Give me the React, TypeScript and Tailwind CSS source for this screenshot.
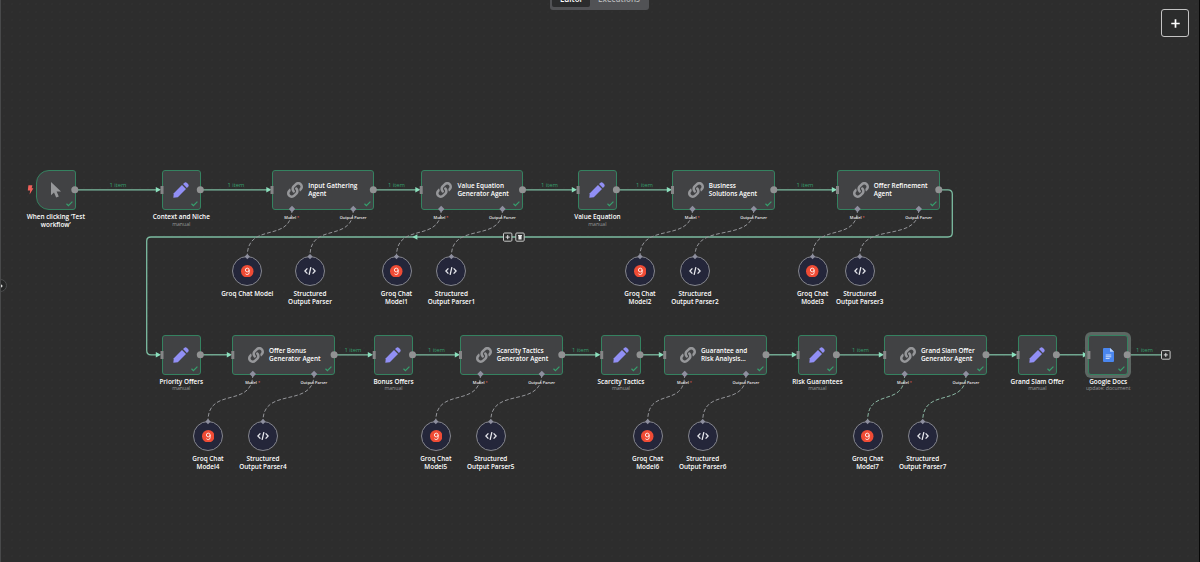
import React from "react";

type Kind = "trigger" | "edit" | "agent" | "docs";

interface FlowNode {
  kind: Kind;
  x: number;
  row: 0 | 1;
  title: string[];
  note?: string;
  models?: [number, number];
  suffix?: string;
}

const ROW_TOP = [170, 335];

const nodes: FlowNode[] = [
  { kind: "trigger", x: 36, row: 0, title: ["When clicking ‘Test", "workflow’"] },
  { kind: "edit", x: 161.5, row: 0, title: ["Context and Niche"], note: "manual" },
  { kind: "agent", x: 271.5, row: 0, title: ["Input Gathering", "Agent"], models: [247.3, 310], suffix: "" },
  { kind: "agent", x: 420.7, row: 0, title: ["Value Equation", "Generator Agent"], models: [396.5, 451.4], suffix: "1" },
  { kind: "edit", x: 577.6, row: 0, title: ["Value Equation"], note: "manual" },
  { kind: "agent", x: 672, row: 0, title: ["Business", "Solutions Agent"], models: [640, 695], suffix: "2" },
  { kind: "agent", x: 837, row: 0, title: ["Offer Refinement", "Agent"], models: [812.6, 859.8], suffix: "3" },
  { kind: "edit", x: 161.5, row: 1, title: ["Priority Offers"], note: "manual" },
  { kind: "agent", x: 232.3, row: 1, title: ["Offer Bonus", "Generator Agent"], models: [208, 263], suffix: "4" },
  { kind: "edit", x: 373.7, row: 1, title: ["Bonus Offers"], note: "manual" },
  { kind: "agent", x: 460, row: 1, title: ["Scarcity Tactics", "Generator Agent"], models: [435.8, 490.8], suffix: "5" },
  { kind: "edit", x: 601.2, row: 1, title: ["Scarcity Tactics"], note: "manual" },
  { kind: "agent", x: 664.2, row: 1, title: ["Guarantee and", "Risk Analysis..."], models: [647.7, 702.7], suffix: "6" },
  { kind: "edit", x: 797.6, row: 1, title: ["Risk Guarantees"], note: "manual" },
  { kind: "agent", x: 884.2, row: 1, title: ["Grand Slam Offer", "Generator Agent"], models: [867.6, 922.7], suffix: "7" },
  { kind: "edit", x: 1017.6, row: 1, title: ["Grand Slam Offer"], note: "manual" },
  { kind: "docs", x: 1088.4, row: 1, title: ["Google Docs"], note: "update: document" },
];

const edges: { x1: number; x2: number; y: number; label?: number }[] = [
  { x1: 76, x2: 161, y: 190, label: 118 },
  { x1: 201, x2: 271.5, y: 190, label: 236 },
  { x1: 374, x2: 420.5, y: 190, label: 396.5 },
  { x1: 523, x2: 577, y: 190, label: 549.5 },
  { x1: 617, x2: 672, y: 190, label: 644.5 },
  { x1: 774, x2: 837, y: 190, label: 805 },
  { x1: 201, x2: 232, y: 355 },
  { x1: 335, x2: 373, y: 355, label: 353 },
  { x1: 413, x2: 460, y: 355, label: 436.5 },
  { x1: 562, x2: 600.5, y: 355, label: 580.5 },
  { x1: 641, x2: 664, y: 355 },
  { x1: 767, x2: 797, y: 355 },
  { x1: 837, x2: 884, y: 355, label: 860.5 },
  { x1: 987, x2: 1017, y: 355 },
  { x1: 1057, x2: 1088, y: 355 },
];

function nodeWidth(kind: Kind) {
  return kind === "agent" ? 102.5 : 39.5;
}

function Pencil() {
  return (
    <svg viewBox="0 0 16 16" className="size-4 fill-[#918ff5]">
      <path d="M0.3 15.7 L0.8 11.2 L9 3 L13 7 L4.8 15.2 Z" />
      <path d="M10 2.1 L11.2 0.9 Q12.6 -0.3 14 1 L15 2 Q16.3 3.4 15.1 4.8 L13.9 6 Z" />
    </svg>
  );
}

function Chain() {
  return (
    <svg viewBox="0 0 512 512" className="size-4 fill-[#96979a]">
      <path d="M326.612 185.391c59.747 59.809 58.927 155.698.36 214.59-.11.12-.24.25-.36.37l-67.2 67.2c-59.27 59.27-155.699 59.262-214.96 0-59.27-59.26-59.27-155.7 0-214.96l37.106-37.106c9.84-9.84 26.786-3.3 27.294 10.606.648 17.722 3.826 35.527 9.69 52.721 1.986 5.822.567 12.262-3.783 16.612l-13.087 13.087c-28.026 28.026-28.905 73.66-1.155 101.96 28.024 28.579 74.086 28.749 102.325.51l67.2-67.19c28.191-28.191 28.073-73.757 0-101.83-3.701-3.694-7.429-6.564-10.341-8.569a16.037 16.037 0 0 1-6.947-12.606c-.396-10.567 3.348-21.456 11.698-29.806l21.054-21.055c5.521-5.521 14.182-6.199 20.584-1.731a152.482 152.482 0 0 1 20.522 17.197zM467.547 44.449c-59.261-59.262-155.69-59.27-214.96 0l-67.2 67.2c-.12.12-.25.25-.36.37-58.566 58.892-59.387 154.781.36 214.59a152.454 152.454 0 0 0 20.521 17.196c6.402 4.468 15.064 3.789 20.584-1.731l21.054-21.055c8.35-8.35 12.094-19.239 11.698-29.806a16.037 16.037 0 0 0-6.947-12.606c-2.912-2.005-6.64-4.875-10.341-8.569-28.073-28.073-28.191-73.639 0-101.83l67.2-67.19c28.239-28.239 74.3-28.069 102.325.51 27.75 28.3 26.872 73.934-1.155 101.96l-13.087 13.087c-4.35 4.35-5.769 10.79-3.783 16.612 5.864 17.194 9.042 34.999 9.69 52.721.509 13.906 17.454 20.446 27.294 10.606l37.106-37.106c59.271-59.259 59.271-155.699.001-214.959z" />
    </svg>
  );
}

function Pointer() {
  return (
    <svg viewBox="0 0 10 16" className="h-4 w-2.5 fill-[#97989a]">
      <path d="M0 0 V13.2 L3 10.4 L5.2 15.5 L7.8 14.4 L5.6 9.5 H10 Z" />
    </svg>
  );
}

function DocIcon() {
  return (
    <svg viewBox="0 0 11 15" className="h-[14px] w-[11px]" preserveAspectRatio="none">
      <path d="M1 0 H7 L11 4 V14 Q11 15 10 15 H1 Q0 15 0 14 V1 Q0 0 1 0 Z" fill="#4a86ee" />
      <path d="M7 0 L11 4 H7 Z" fill="#b9d1fb" />
      <path d="M2.7 7.5 H8.3 M2.7 9.4 H8.3 M2.7 11.3 H6.6" stroke="#dce8fd" strokeWidth="0.9" />
    </svg>
  );
}

function Check() {
  return (
    <svg viewBox="0 0 7 5.5" className="absolute right-[2px] bottom-[2.5px] h-[5.5px] w-[7px]">
      <path d="M0.5 2.8 L2.4 4.6 L6.4 0.6" fill="none" stroke="#36a06d" strokeWidth="1.2" />
    </svg>
  );
}

function NodeBox({ node }: { node: FlowNode }) {
  const corner = node.kind === "trigger" ? "rounded-l-[13px] rounded-r-[3px]" : "rounded-[3px]";
  const halo = node.kind === "docs" ? "shadow-[0_0_0_3px_#5d6763]" : "";
  return (
    <div
      className={`absolute flex h-[40px] items-center border border-[#358260] bg-[#414244] ${corner} ${halo} ${
        node.kind === "agent" ? "pl-[14.5px]" : "justify-center"
      }`}
      style={{ left: node.x, top: ROW_TOP[node.row], width: nodeWidth(node.kind) }}
    >
      {node.kind === "trigger" && <Pointer />}
      {node.kind === "edit" && <Pencil />}
      {node.kind === "docs" && <DocIcon />}
      {node.kind === "agent" && (
        <>
          <Chain />
          <div className="ml-[5.3px] flex flex-col text-[6.4px] leading-[7.8px] font-semibold whitespace-nowrap text-white">
            {node.title.map((line) => (
              <span key={line}>{line}</span>
            ))}
          </div>
        </>
      )}
      <Check />
    </div>
  );
}

function Caption({ x, y, lines, note }: { x: number; y: number; lines: string[]; note?: string }) {
  return (
    <div
      className="absolute flex -translate-x-1/2 flex-col items-center text-[6.4px] leading-[7.8px] font-semibold whitespace-nowrap text-white"
      style={{ left: x, top: y }}
    >
      {lines.map((line) => (
        <span key={line}>{line}</span>
      ))}
      {note && <span className="text-[5.2px] leading-[7px] font-normal text-[#98999a]">{note}</span>}
    </div>
  );
}

function SubNode({ x, y, lines, groq }: { x: number; y: number; lines: string[]; groq: boolean }) {
  return (
    <>
      <div
        className="absolute flex size-[30px] -translate-x-1/2 items-center justify-center rounded-full border border-[#85868d] bg-[#24263a]"
        style={{ left: x, top: y - 15 }}
      >
        {groq ? (
          <svg viewBox="0 0 12 12" className="size-[12.5px]">
            <circle cx="6" cy="6" r="6" fill="#ef4b35" />
            <circle cx="6" cy="4.8" r="1.8" fill="none" stroke="#ffe9e4" strokeWidth="0.95" />
            <path d="M7.8 4.7 V7.3 Q7.7 9.2 6 9.2 Q4.9 9.2 4.3 8.4" fill="none" stroke="#ffe9e4" strokeWidth="0.95" />
          </svg>
        ) : (
          <svg viewBox="0 0 12 10" className="h-2.5 w-3" fill="none" stroke="#e6e7ec" strokeWidth="1.3">
            <path d="M3.4 2.4 L0.9 5 L3.4 7.6 M8.6 2.4 L11.1 5 L8.6 7.6 M6.9 1.2 L5.1 8.8" />
          </svg>
        )}
      </div>
      <Caption x={x} y={y + 18.6} lines={lines} />
    </>
  );
}

function Wires() {
  return (
    <svg viewBox="0 0 1200 562" className="absolute inset-0 h-full w-full" fill="none">
      <g stroke="#7cbca1" strokeWidth="1.3">
        {edges.map((e) => (
          <path key={`${e.x1}-${e.y}`} d={`M${e.x1} ${e.y - 0.2} H${e.x2 - 3}`} />
        ))}
        <path d="M939 189.8 H948 Q952.3 189.8 952.3 194 V232.8 Q952.3 237 948 237 H151 Q146.7 237 146.7 241 V350.5 Q146.7 354.8 151 354.8 H158" />
        <path d="M1128 354.8 H1161" />
      </g>
      <g fill="#8be0bd">
        {edges.map((e) => (
          <path key={`${e.x2}-${e.y}`} d={`M${e.x2 - 5.2} ${e.y - 3} L${e.x2} ${e.y - 0.2} L${e.x2 - 5.2} ${e.y + 2.6} Z`} />
        ))}
        <path d="M155.8 352 L161 354.8 L155.8 357.6 Z" />
        <path d="M417.4 234.2 L412.4 237 L417.4 239.8 Z" />
      </g>
      {nodes.map((n) => {
        if (!n.models) return null;
        const top = ROW_TOP[n.row] + 39;
        const end = ROW_TOP[n.row] + 86;
        return n.models.map((mx, i) => {
          const sx = n.x + (i === 0 ? 20.5 : 81.8);
          return (
            <path
              key={mx}
              d={`M${sx} ${top} C${sx} ${top + 35} ${mx} ${end - 35} ${mx} ${end}`}
              stroke={n.suffix === "7" ? "#8bb8a4" : "#949599"}
              strokeWidth="1"
              strokeDasharray="3.8 2"
            />
          );
        });
      })}
    </svg>
  );
}

function Ports() {
  return (
    <svg viewBox="0 0 1200 562" className="pointer-events-none absolute inset-0 h-full w-full">
      {nodes.map((n) => {
        const top = ROW_TOP[n.row];
        return (
          <g key={`${n.x}-${n.row}`}>
            <circle cx={n.x + nodeWidth(n.kind) - 0.7} cy={top + 19.8} r="3.5" fill="#919293" />
            {n.kind !== "trigger" && <rect x={n.x - 1} y={top + 16} width="3" height="8" fill="#858687" />}
            {n.models?.map((mx, i) => {
              const sx = n.x + (i === 0 ? 20.5 : 81.8);
              return (
                <g key={mx} fill="#8e8f9f">
                  <path d={`M${sx} ${top + 35.8} l3.2 3.2 l-3.2 3.2 l-3.2 -3.2 Z`} />
                  <path d={`M${mx} ${top + 84} l2.6 2.6 l-2.6 2.6 l-2.6 -2.6 Z`} />
                </g>
              );
            })}
          </g>
        );
      })}
      <path d="M28.4 185.2 H32.4 L31.7 188.2 H33.4 L29.6 194.6 L30.2 190.6 H27.8 Z" fill="#f0605a" />
      <g fill="#2d2e2e" stroke="#c9cac9" strokeWidth="1">
        <rect x="503.5" y="233" width="8.4" height="8.2" rx="1" />
        <rect x="515.8" y="233" width="8.4" height="8.2" rx="1" />
        <rect x="1161.5" y="350.6" width="8.6" height="8.6" rx="1" />
      </g>
      <path d="M505.6 237.1 H509.8 M507.7 235 V239.2 M1163.8 354.9 H1167.8 M1165.8 352.9 V356.9" stroke="#dededf" strokeWidth="1" />
      <path d="M518 235 H522 V236 H521.6 V239.4 H518.4 V236 H518 Z" fill="#e5e5e5" />
    </svg>
  );
}

function PortLabel({ x, y, children }: { x: number; y: number; children: React.ReactNode }) {
  return (
    <span
      className="absolute -translate-x-1/2 text-[3.9px] leading-[6px] font-semibold whitespace-nowrap text-[#ececec]"
      style={{ left: x, top: y }}
    >
      {children}
    </span>
  );
}

function RunLabel({ x, y }: { x: number; y: number }) {
  return (
    <span
      className="absolute -translate-x-1/2 text-[5.8px] leading-[8px] whitespace-nowrap text-[#36a06d]"
      style={{ left: x, top: y }}
    >
      1 item
    </span>
  );
}

export default function App() {
  return (
    <main className="relative h-[562px] w-[1200px] overflow-hidden border-r border-l border-r-[#080808] border-l-[#48494a] bg-[#2d2d2d] font-['Open_Sans',sans-serif]">
      <div className="absolute inset-y-0 -left-px w-[1200px] bg-[radial-gradient(circle,#333333_0.5px,transparent_0.9px)] bg-[length:8px_8px]">
        <Wires />
        {edges.map((e) => e.label && <RunLabel key={e.label} x={e.label} y={e.y - 9} />)}
        <RunLabel x={1144.5} y={346} />

        {nodes.map((n) => (
          <React.Fragment key={`${n.x}-${n.row}`}>
            <NodeBox node={n} />
            {n.kind !== "agent" && (
              <Caption x={n.x + 19.8} y={ROW_TOP[n.row] + (n.row ? 42.7 : 43)} lines={n.title} note={n.note} />
            )}
            {n.models && (
              <>
                <PortLabel x={n.x + 20.3} y={ROW_TOP[n.row] + 45.3}>
                  Model <span className="text-[#f0605a]">*</span>
                </PortLabel>
                <PortLabel x={n.x + 81.6} y={ROW_TOP[n.row] + 45.3}>
                  Output Parser
                </PortLabel>
                <SubNode
                  groq
                  x={n.models[0]}
                  y={ROW_TOP[n.row] + 101.2}
                  lines={n.suffix ? ["Groq Chat", `Model${n.suffix}`] : ["Groq Chat Model"]}
                />
                <SubNode
                  groq={false}
                  x={n.models[1]}
                  y={ROW_TOP[n.row] + 101.2}
                  lines={["Structured", `Output Parser${n.suffix}`]}
                />
              </>
            )}
          </React.Fragment>
        ))}
        <Ports />
      </div>

      <header className="relative grid grid-cols-3 items-start">
        <nav className="col-start-2 -mt-3 flex h-[22px] w-[99px] justify-self-center rounded-[3px] bg-[#515255] p-[2px] text-[8px] leading-[18px] font-semibold">
          <span className="h-[17px] w-[38px] rounded-[2px] bg-[#2b2c2d] text-center text-white">Editor</span>
          <span className="flex-1 text-center text-[#b5b6b8]">Executions</span>
        </nav>
        <button className="mt-[9px] mr-[10px] flex size-7 items-center justify-center justify-self-end rounded-[3px] border border-[#c4c4c4] bg-[#2b2c2c]">
          <svg viewBox="0 0 10 10" className="size-[9px]">
            <path d="M5 0.3 V9.7 M0.3 5 H9.7" stroke="#ffffff" strokeWidth="1.9" />
          </svg>
        </button>
      </header>

      <div className="absolute top-[279px] left-[-7px] flex size-[13px] items-center justify-end rounded-full border border-[#4b4c4d] bg-[#252626] pr-[3px]">
        <svg viewBox="0 0 4 6" className="h-1.5 w-1">
          <path d="M0.6 0.8 L3 3 L0.6 5.2" fill="none" stroke="#e4e4e4" strokeWidth="1.1" />
        </svg>
      </div>
    </main>
  );
}
